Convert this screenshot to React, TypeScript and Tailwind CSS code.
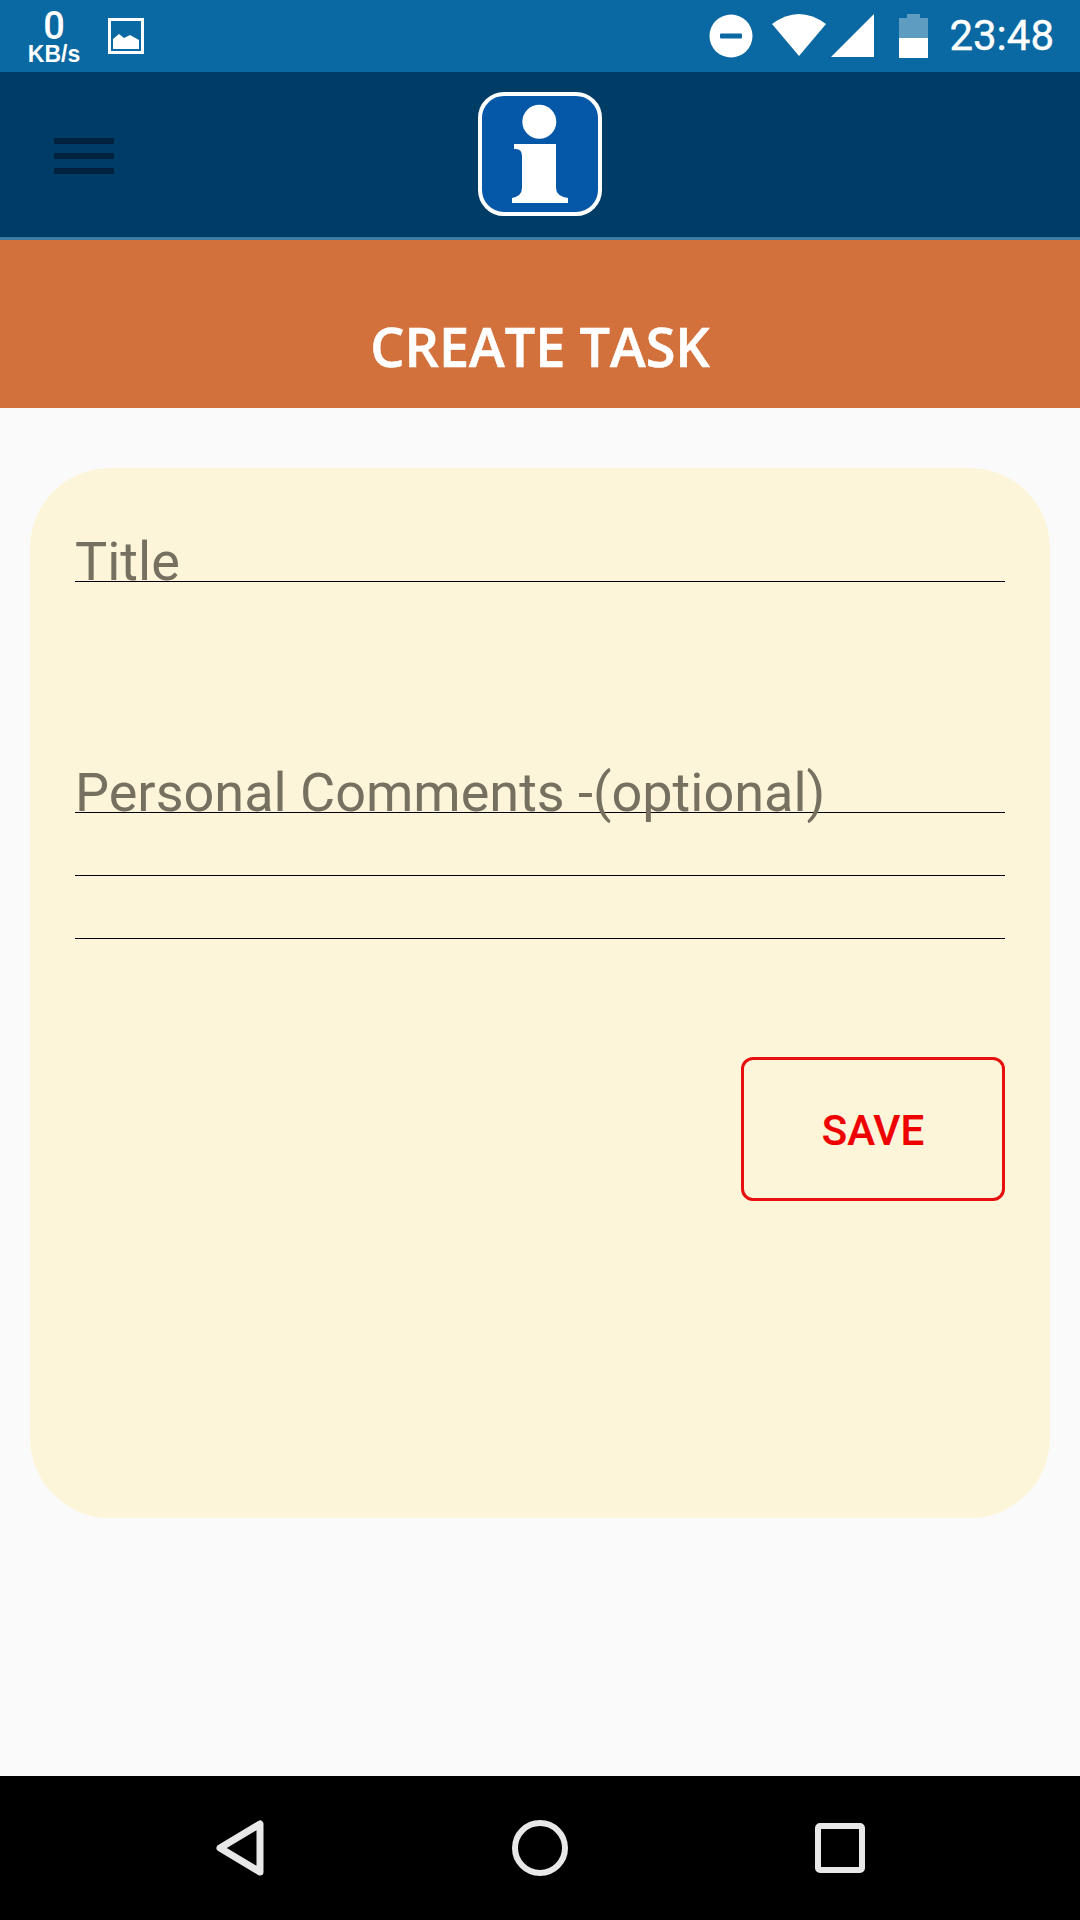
const App = () => {
  return (
    <div className="flex h-[1920px] w-[1080px] flex-col overflow-hidden bg-[#fafafa] font-['Roboto',sans-serif]">
      {/* status bar */}
      <div className="flex h-[72px] shrink-0 items-center bg-[#0a68a2] text-white">
        <div className="ml-[26px] flex w-[56px] flex-col items-center">
          <span className="text-[38px] leading-[36px] font-medium">0</span>
          <span className="font-['Liberation_Sans',sans-serif] text-[23px] leading-[20px] font-bold">KB/s</span>
        </div>
        <svg className="ml-[26px]" width="36" height="36" viewBox="0 0 36 36">
          <rect x="1.5" y="1.5" width="33" height="33" fill="none" stroke="#fff" strokeWidth="3" />
          <path d="M5 31V21L11 16L16 20L22 17L31 22V31Z" fill="#fff" />
        </svg>
        <div className="ml-auto flex items-center">
          <svg width="44" height="44" viewBox="0 0 44 44">
            <circle cx="22" cy="22" r="21.5" fill="#fff" />
            <rect x="11" y="19.5" width="22" height="5" rx="1" fill="#0a68a2" />
          </svg>
          <svg className="ml-[19px]" width="54" height="44" viewBox="0 0 54 44">
            <path d="M0 10Q27 -10 54 10L27 42Z" fill="#fff" />
          </svg>
          <svg className="ml-[5px]" width="43" height="44" viewBox="0 0 43 44">
            <path d="M0 43L43 0V43Z" fill="#fff" />
          </svg>
          <svg className="ml-[25px]" width="29" height="44" viewBox="0 0 29 44">
            <path d="M8 0H21V4H29V24H0V4H8Z" fill="#fff" fillOpacity="0.35" />
            <path d="M0 24H29V44H0Z" fill="#fff" />
          </svg>
          <span className="mr-[26px] ml-[21px] text-[42px] leading-[44px] [-webkit-text-stroke:0.4px_#fff]">23:48</span>
        </div>
      </div>

      {/* header */}
      <div className="grid h-[168px] shrink-0 grid-cols-3 items-center border-b-[3px] border-[#3f7ba1] bg-[#003d66]">
        <div className="ml-[54px] flex w-[60px] flex-col gap-[9px] pt-[2px]">
          <div className="h-[6px] bg-[#01213d]" />
          <div className="h-[6px] bg-[#01213d]" />
          <div className="h-[6px] bg-[#01213d]" />
        </div>
        <div className="flex justify-center pb-[2px]">
          <svg width="126" height="126" viewBox="-1 -1 126 126">
            <rect x="2" y="2" width="120" height="120" rx="24" fill="#0558a8" stroke="#fff" strokeWidth="4" />
            <circle cx="61.3" cy="29.7" r="17" fill="#fff" />
            <path d="M36 52H78V96Q78 104 90 106V111H34V106Q44 104 44 96V64Q44 56 36 57Z" fill="#fff" />
          </svg>
        </div>
      </div>

      {/* title band */}
      <div className="flex h-[168px] shrink-0 items-end justify-center bg-[#d2713c] pb-[31px]">
        <h1 className="font-['Open_Sans',sans-serif] text-[54px] leading-[62px] font-semibold text-white [-webkit-text-stroke:0.6px_#fff]">CREATE TASK</h1>
      </div>

      {/* form card */}
      <div className="mx-[30px] mt-[60px] flex h-[1050px] flex-col rounded-[80px] bg-[#fdf5da] px-[45px] pt-[50px]">
        <div className="h-[64px] border-b border-black text-[54px] leading-[87px] text-[#75705f]">Title</div>
        <div className="mt-[167px] h-[64px] border-b border-black text-[54px] leading-[87px] text-[#75705f]">
          Personal Comments -(optional)
        </div>
        <div className="h-[63px] border-b border-black" />
        <div className="h-[63px] border-b border-black" />
        <div className="mt-[118px] flex justify-end">
          <button className="flex h-[144px] w-[264px] items-center justify-center rounded-[12px] border-[3px] border-[#e8100f] pt-[2px] text-[42px] font-medium text-[#ee0000] [-webkit-text-stroke:0.2px_#ee0000]">
            SAVE
          </button>
        </div>
      </div>

      {/* nav bar */}
      <div className="mt-auto flex h-[144px] shrink-0 items-center bg-black pl-[215px]">
        <svg width="50" height="58" viewBox="0 0 50 58">
          <path d="M45 5V53L5 29Z" fill="none" stroke="#e8e8e8" strokeWidth="7" strokeLinejoin="round" />
        </svg>
        <svg className="ml-[247px]" width="56" height="56" viewBox="0 0 56 56">
          <circle cx="28" cy="28" r="25" fill="none" stroke="#e8e8e8" strokeWidth="6" />
        </svg>
        <svg className="ml-[247px]" width="50" height="50" viewBox="0 0 50 50">
          <rect x="3" y="3" width="44" height="44" rx="2" fill="none" stroke="#e8e8e8" strokeWidth="6" />
        </svg>
      </div>
    </div>
  );
};

export default App;
